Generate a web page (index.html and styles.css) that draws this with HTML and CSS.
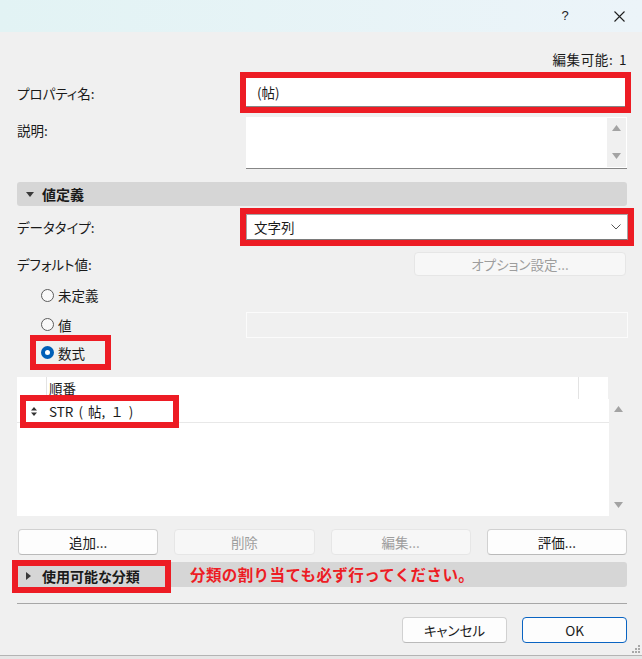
FILE: index.html
```html
<!DOCTYPE html>
<html lang="ja">
<head>
    <meta charset="UTF-8">
    <meta name="viewport" content="width=device-width, initial-scale=1.0">
    <title>プロパティ設定</title>
    <link rel="stylesheet" href="styles.css">
</head>
<body>
<div class="window">
    <header class="titlebar">
        <button class="title-btn help">?</button>
        <button class="title-btn close">
            <svg width="11" height="11" viewBox="0 0 11 11"><path d="M0.5 0.5 L10.5 10.5 M10.5 0.5 L0.5 10.5" stroke="#1f1f1f" stroke-width="1.1" fill="none"/></svg>
        </button>
    </header>

    <main class="dialog">
        <p class="editable">編集可能: 1</p>

        <div class="field-row row-name">
            <label>プロパティ名:</label>
            <div class="input marked">(帖)</div>
        </div>

        <div class="field-row row-desc">
            <label>説明:</label>
            <div class="textarea">
                <div class="scroll">
                    <svg class="arrow" width="9" height="6" viewBox="0 0 9 6"><path d="M0 6 L4.5 0 L9 6 Z"/></svg>
                    <svg class="arrow" width="9" height="6" viewBox="0 0 9 6"><path d="M0 0 L9 0 L4.5 6 Z"/></svg>
                </div>
            </div>
        </div>

        <!-- 値定義 -->
        <div class="section-bar">
            <svg class="caret" width="8" height="5" viewBox="0 0 8 5"><path d="M0 0 L8 0 L4 5 Z"/></svg>
            <span>値定義</span>
        </div>

        <div class="field-row row-type">
            <label>データタイプ:</label>
            <div class="select marked">
                <span>文字列</span>
                <svg width="10" height="6" viewBox="0 0 10 6"><path d="M0.5 0.5 L5 5 L9.5 0.5" stroke="#555" stroke-width="1" fill="none"/></svg>
            </div>
        </div>

        <div class="field-row row-default">
            <label>デフォルト値:</label>
            <button class="btn btn-option" disabled>オプション設定...</button>
        </div>

        <div class="radio-row row-undef">
            <label class="radio"><span class="dot"></span>未定義</label>
        </div>
        <div class="field-row radio-row row-value">
            <label class="radio"><span class="dot"></span>値</label>
            <div class="input disabled"></div>
        </div>
        <div class="radio-row row-formula">
            <label class="radio checked marked"><span class="dot"></span>数式</label>
        </div>

        <!-- 数式リスト -->
        <div class="list">
            <div class="list-head">
                <div class="cell"></div>
                <div class="cell">順番</div>
                <div class="cell"></div>
            </div>
            <div class="list-body">
                <div class="list-row">
                    <span class="row-mark marked">
                        <svg width="6" height="9" viewBox="0 0 6 9"><path d="M0 3.5 L3 0 L6 3.5 Z M0 5.5 L6 5.5 L3 9 Z" fill="#333"/></svg>
                        <span class="formula">STR ( 帖, １ )</span>
                    </span>
                </div>
            </div>
            <div class="list-scroll">
                <svg class="arrow" width="9" height="6" viewBox="0 0 9 6"><path d="M0 6 L4.5 0 L9 6 Z"/></svg>
                <svg class="arrow" width="9" height="6" viewBox="0 0 9 6"><path d="M0 0 L9 0 L4.5 6 Z"/></svg>
            </div>
        </div>

        <div class="list-buttons">
            <button class="btn">追加...</button>
            <button class="btn" disabled>削除</button>
            <button class="btn" disabled>編集...</button>
            <button class="btn">評価...</button>
        </div>

        <!-- 使用可能な分類 -->
        <div class="section-bar closed">
            <span class="bar-head marked">
                <svg class="caret" width="5" height="8" viewBox="0 0 5 8"><path d="M0 0 L5 4 L0 8 Z"/></svg>
                <span>使用可能な分類</span>
            </span>
            <span class="note">分類の割り当ても必ず行ってください。</span>
        </div>

        <hr class="separator">

        <div class="footer-buttons">
            <button class="btn">キャンセル</button>
            <button class="btn btn-default">OK</button>
        </div>
    </main>

    <svg class="grip" width="9" height="9" viewBox="0 0 9 9" fill="#a8a8a8">
        <rect x="7" y="1" width="2" height="2"/>
        <rect x="4" y="4" width="2" height="2"/><rect x="7" y="4" width="2" height="2"/>
        <rect x="1" y="7" width="2" height="2"/><rect x="4" y="7" width="2" height="2"/><rect x="7" y="7" width="2" height="2"/>
    </svg>
</div>
</body>
</html>
```

FILE: styles.css
```css
/* 基本設定 */
* {
    margin: 0;
    padding: 0;
    box-sizing: border-box;
}

body {
    width: 642px;
    height: 659px;
    overflow: hidden;
    background: #e6e6e6;
    font-family: "Noto Sans CJK JP", "Liberation Sans", sans-serif;
    font-size: 13.5px;
    line-height: 18px;
    color: #1a1a1a;
    font-feature-settings: "palt";
}

button {
    font: inherit;
    color: inherit;
}

.window {
    position: relative;
    height: 656px;
    background: #f0f0f0;
    border-bottom: 1px solid #b4b4b4;
}

/* タイトルバー */
.titlebar {
    height: 32px;
    display: flex;
    justify-content: flex-end;
    gap: 8px;
    background: linear-gradient(to right, #e2f3f4, #ecf4f9);
}

.title-btn {
    width: 46px;
    height: 32px;
    border: 0;
    background: none;
    display: flex;
    align-items: center;
    justify-content: center;
    font-family: "Liberation Sans", sans-serif;
    font-size: 13px;
    color: #1f1f1f;
}

/* ダイアログ本体 */
.dialog {
    padding: 0 15px 0 17px;
}

.editable {
    margin-top: 18px;
    text-align: right;
    font-feature-settings: normal;
    letter-spacing: 0.6px;
    word-spacing: 2px;
}

.field-row {
    display: grid;
    grid-template-columns: 229px 1fr;
    align-items: center;
}

.marked {
    outline: 6px solid #ed1c24;
}

.input {
    background: #fff;
    border-bottom: 1px solid #868686;
    display: flex;
    align-items: center;
}

.row-name {
    margin-top: 10px;
}

.row-name .input {
    height: 29px;
    margin-right: 2px;
    padding-left: 11px;
}

.row-desc {
    margin-top: 10px;
    align-items: start;
}

.row-desc label {
    padding-top: 4px;
}

.textarea {
    height: 52px;
    background: #fff;
    border-bottom: 1px solid #868686;
    display: flex;
    justify-content: flex-end;
    padding: 1px 1px 1px 0;
}

.scroll {
    width: 19px;
    background: #f0f0f0;
    display: flex;
    flex-direction: column;
    justify-content: space-between;
    align-items: center;
    padding: 7px 0 8px;
}

.arrow {
    display: block;
    fill: #a3a3a3;
}

/* セクションバー */
.section-bar {
    display: flex;
    align-items: center;
    background: #d6d6d6;
    border-radius: 3px;
    font-size: 14px;
    font-weight: bold;
}

.section-bar .caret {
    fill: #3a3a3a;
}

.section-bar:not(.closed) {
    margin-top: 13px;
    height: 24px;
    padding-left: 9px;
    gap: 8px;
}

.section-bar.closed {
    margin-top: 7px;
    height: 25px;
    padding-left: 1px;
}

.bar-head {
    align-self: flex-end;
    width: 147px;
    height: 21px;
    display: flex;
    align-items: center;
    gap: 11px;
    padding-left: 8px;
}

.note {
    margin-left: 25px;
    color: #ed1c24;
    font-size: 15.5px;
    letter-spacing: 0.4px;
    font-feature-settings: normal;
}

/* データタイプ */
.row-type {
    margin-top: 8px;
}

.select {
    height: 26px;
    margin-right: -1px;
    background: #fff;
    border: 1px solid #a6a6a6;
    border-bottom-color: #7a7a7a;
    display: flex;
    align-items: center;
    justify-content: space-between;
    padding: 0 6px 0 7px;
}

.row-default {
    margin-top: 12px;
}

/* ボタン */
.btn {
    height: 26px;
    background: #fdfdfd;
    border: 1px solid #d1d1d1;
    border-bottom-color: #bababa;
    border-radius: 4px;
}

.btn:disabled {
    background: #f7f7f7;
    border-color: #e6e6e6;
    color: #9d9d9d;
}

.btn-option {
    justify-self: end;
    width: 212px;
    height: 24px;
    margin-right: 1px;
}

.btn-default {
    border-color: #0a64c2;
}

/* ラジオボタン */
.radio {
    display: inline-flex;
    align-items: center;
    gap: 4px;
    margin-left: 19px;
    padding: 0 20px 0 5px;
}

.dot {
    width: 13px;
    height: 13px;
    border: 1px solid #5c5c5c;
    border-radius: 50%;
    background: #f9f9f9;
}

.radio.checked .dot {
    border: 4px solid #005fb8;
    background: #fff;
}

.row-undef {
    margin-top: 10px;
}

.row-value {
    margin-top: 7px;
}

.row-value .input.disabled {
    height: 26px;
    margin-right: -1px;
    background: #f0f0f0;
    border: 1px solid #fbfbfb;
}

.row-formula {
    margin-top: 3px;
}

.radio.marked {
    padding: 3px 20px 2px 5px;
}

/* 数式リスト */
.list {
    margin-top: 13px;
    display: grid;
    grid-template-columns: 1fr 18px;
    grid-template-rows: 22px 117px;
}

.list-head {
    grid-column: 1;
    margin-right: 1px;
    background: #fff;
    display: grid;
    grid-template-columns: 30px 1fr 30px;
}

.list-head .cell {
    display: flex;
    align-items: center;
    padding-left: 2px;
}

.list-head .cell:first-child {
    border-right: 1px solid #e3e3e3;
}

.list-head .cell:last-child {
    border-left: 1px solid #e3e3e3;
}

.list-body {
    grid-column: 1;
    grid-row: 2;
    background: #fff;
}

.list-row {
    height: 24px;
    border-bottom: 1px solid #e8e8e8;
    display: flex;
    align-items: flex-end;
    padding-left: 9px;
}

.row-mark {
    width: 147px;
    height: 21px;
    display: flex;
    align-items: center;
    gap: 12px;
    padding-left: 5px;
}

.formula {
    font-feature-settings: normal;
    word-spacing: 2px;
}

.list-scroll {
    grid-column: 2;
    grid-row: 2;
    display: flex;
    flex-direction: column;
    justify-content: space-between;
    align-items: center;
    padding: 7px 0 8px;
}

.list-buttons {
    margin-top: 13px;
    padding-left: 1px;
    display: grid;
    grid-template-columns: repeat(4, 1fr);
    gap: 16px;
}

/* フッター */
.separator {
    margin-top: 16px;
    border: 0;
    height: 1px;
    background: #a7a7a7;
}

.footer-buttons {
    margin-top: 13px;
    display: flex;
    justify-content: flex-end;
    gap: 15px;
}

.footer-buttons .btn {
    width: 105px;
}

.grip {
    position: absolute;
    right: 2px;
    bottom: 2px;
}
```
